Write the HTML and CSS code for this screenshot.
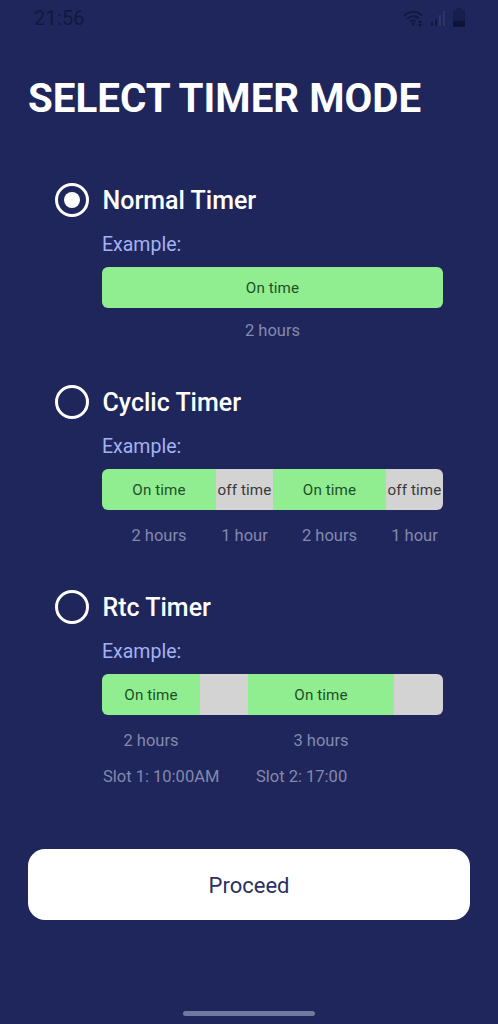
FILE: index.html
```html
<!DOCTYPE html>
<html lang="en">
<head>
<meta charset="utf-8">
<title>Select Timer Mode</title>
<link rel="stylesheet" href="styles.css">
</head>
<body>
<main class="screen">
  <div class="status">
    <span class="clock">21:56</span>
    <span class="status-icons">
      <svg class="wifi" viewBox="0 0 22 18" width="22" height="18"><g fill="none" stroke="#11183f" stroke-width="1.6" stroke-linecap="round"><path d="M1.5 6.5C6.5 1.5 14 1.500 18.500 6"/><path d="M4.500 9.500C8 6.500 12 6.500 15.500 9"/><path d="M7.500 12.500C9 11.200 11 11.200 12.500 12.200"/></g><circle cx="10" cy="15" r="1.500" fill="#11183f"/><path d="M17 11l2 3h-4zM17 18l-2-3h4z" fill="#11183f"/></svg>
      <svg class="signal" viewBox="0 0 16 18" width="16" height="18"><rect x="0" y="13" width="2" height="4" fill="#11183f"/><rect x="4" y="10" width="2" height="7" fill="#11183f"/><rect x="8" y="6" width="2" height="11" fill="#2b3568"/><rect x="12" y="2" width="2" height="15" fill="#2b3568"/></svg>
      <svg class="battery" viewBox="0 0 12 20" width="12" height="20"><rect x="3.500" y="0" width="5" height="2" fill="#171e4d"/><rect x="0" y="2" width="12" height="17" rx="1.500" fill="#171e4d"/><path d="M0 13h12v4.500a1.500 1.500 0 0 1-1.500 1.500h-9A1.500 1.500 0 0 1 0 17.500z" fill="#0e1438"/></svg>
    </span>
  </div>

  <h1 class="title">SELECT TIMER MODE</h1>

  <section class="mode mode-normal">
    <div class="mode-head">
      <span class="radio radio-on"></span>
      <h2 class="mode-name">Normal Timer</h2>
    </div>
    <div class="mode-body">
      <p class="example">Example:</p>
      <div class="bar cols-normal">
        <span class="seg on">On time</span>
      </div>
      <div class="labels labels-normal cols-normal">
        <span>2 hours</span>
      </div>
    </div>
  </section>

  <section class="mode mode-cyclic">
    <div class="mode-head">
      <span class="radio"></span>
      <h2 class="mode-name">Cyclic Timer</h2>
    </div>
    <div class="mode-body">
      <p class="example">Example:</p>
      <div class="bar cols-cyclic">
        <span class="seg on">On time</span>
        <span class="seg off">off time</span>
        <span class="seg on">On time</span>
        <span class="seg off">off time</span>
      </div>
      <div class="labels cols-cyclic">
        <span>2 hours</span>
        <span>1 hour</span>
        <span>2 hours</span>
        <span>1 hour</span>
      </div>
    </div>
  </section>

  <section class="mode mode-rtc">
    <div class="mode-head">
      <span class="radio"></span>
      <h2 class="mode-name">Rtc Timer</h2>
    </div>
    <div class="mode-body">
      <p class="example">Example:</p>
      <div class="bar cols-rtc">
        <span class="seg on">On time</span>
        <span class="seg off"></span>
        <span class="seg on">On time</span>
        <span class="seg off"></span>
      </div>
      <div class="labels cols-rtc">
        <span>2 hours</span>
        <span></span>
        <span>3 hours</span>
        <span></span>
      </div>
      <div class="slots">
        <span class="slot slot-first">Slot 1: 10:00AM</span>
        <span class="slot">Slot 2: 17:00</span>
      </div>
    </div>
  </section>

  <button class="proceed" type="button">Proceed</button>
  <div class="home-indicator"></div>
</main>
</body>
</html>
```

FILE: styles.css
```css
* { box-sizing: border-box; }
html, body { margin: 0; padding: 0; }
body {
  background: #1f265c;
  font-family: Roboto, "Liberation Sans", sans-serif;
}
.screen {
  width: 498px;
  height: 1024px;
  display: flex;
  flex-direction: column;
  overflow: hidden;
}
.status {
  flex: none;
  height: 36px;
  padding: 0 33px 0 34px;
  display: flex;
  align-items: center;
  justify-content: space-between;
}
.clock { font-size: 20px; color: #11183f; letter-spacing: 0.2px; }
.status-icons { display: flex; align-items: center; gap: 6px; }
.title {
  flex: none;
  margin: 40px 0 0 28px;
  height: 46px;
  line-height: 46px;
  font-size: 40.3px;
  font-weight: 700;
  color: #fff;
  white-space: nowrap;
}
.mode { flex: none; padding: 0 55px; }
.mode-normal { margin-top: 60px; }
.mode-cyclic { margin-top: 40px; }
.mode-rtc { margin-top: 40px; }
.mode-head {
  height: 36px;
  display: flex;
  align-items: center;
  gap: 14px;
}
.radio {
  width: 34px;
  height: 34px;
  border: 3.5px solid #fff;
  border-radius: 50%;
  flex: none;
  display: flex;
  align-items: center;
  justify-content: center;
}
.radio-on::after {
  content: "";
  width: 16px;
  height: 16px;
  border-radius: 50%;
  background: #fff;
}
.mode-name {
  margin: 0;
  font-size: 25px;
  font-weight: 500;
  color: #fff;
  transform: translateX(-0.5px);
}
.mode-body { margin-left: 47px; width: 341px; }
.example {
  margin: 12px 0 0;
  height: 30px;
  line-height: 30px;
  font-size: 19.5px;
  color: #a3b2f2;
}
.bar {
  margin-top: 7px;
  height: 41px;
  border-radius: 6px;
  overflow: hidden;
  display: grid;
}
.cols-normal { display: grid; grid-template-columns: 1fr; }
.cols-cyclic { display: grid; grid-template-columns: 114px 57px 113px 57px; }
.cols-rtc { display: grid; grid-template-columns: 98px 48px 146px 49px; }
.seg {
  display: flex;
  align-items: center;
  justify-content: center;
  padding-top: 1px;
  font-size: 15.2px;
  font-weight: 450;
  letter-spacing: 0.1px;
  white-space: nowrap;
}
.seg.on { background: #90ee90; color: #1f4f27; }
.seg.off { background: #d3d3d3; color: #3a3a3a; }
.labels {
  margin-top: 13px;
  height: 26px;
  line-height: 26px;
  font-size: 16.500px;
  color: #8489ad;
}
.labels-normal { margin-top: 10px; }
.labels span { text-align: center; white-space: nowrap; }
.slots {
  margin-top: 10px;
  height: 26px;
  line-height: 26px;
  font-size: 16.500px;
  color: #8489ad;
  display: flex;
}
.slot-first { width: 154px; padding-left: 1px; }
.proceed {
  flex: none;
  margin: 59px 0 0 28px;
  width: 442px;
  height: 71px;
  padding: 2px 0 0;
  border: 0;
  border-radius: 17px;
  background: #fff;
  color: #2b2f63;
  font-family: inherit;
  font-size: 22px;
}
.home-indicator {
  flex: none;
  margin: 91px auto 0;
  width: 132px;
  height: 5px;
  border-radius: 3px;
  background: #7078a2;
}
```
